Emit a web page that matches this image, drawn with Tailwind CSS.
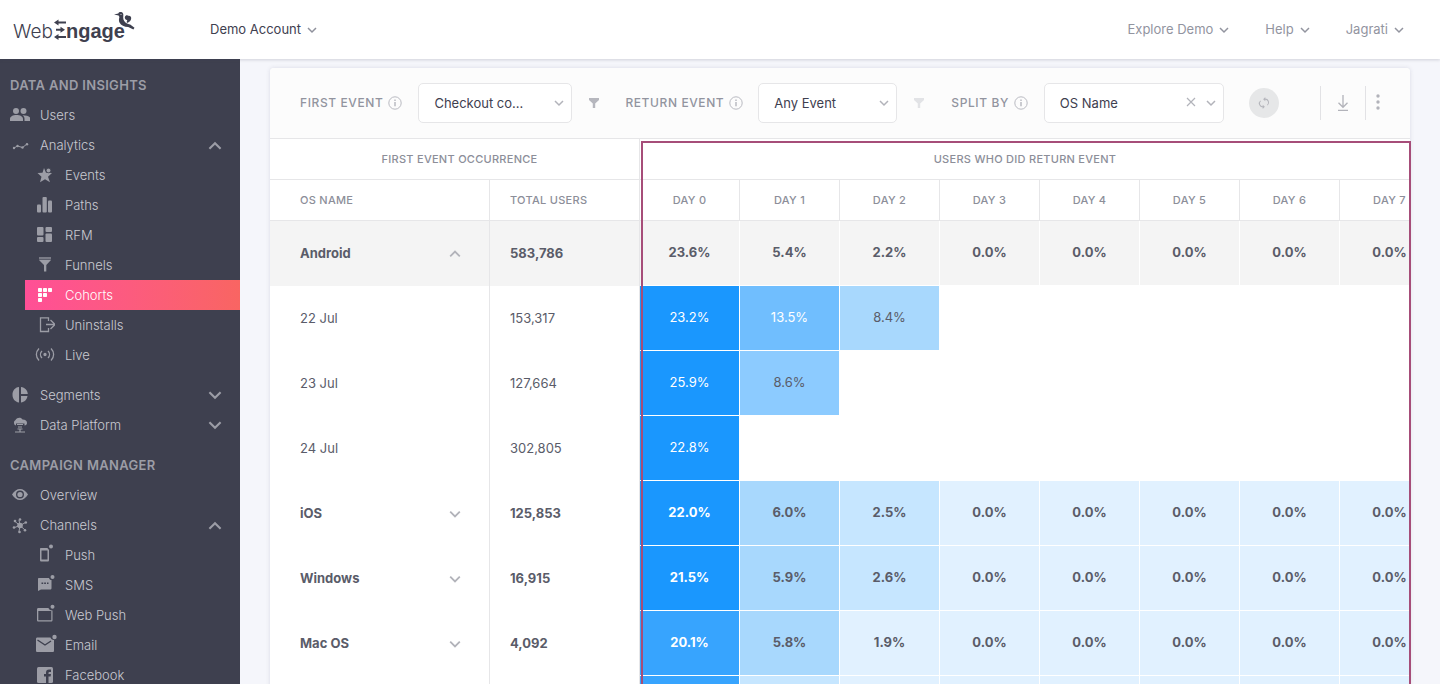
<!DOCTYPE html>
<html lang="en">
<head>
<meta charset="utf-8">
<meta name="viewport" content="width=device-width, initial-scale=1">
<title>WebEngage Cohorts</title>
<script src="https://cdn.jsdelivr.net/npm/@tailwindcss/browser@4"></script>
</head>
<body class="flex h-screen flex-col overflow-hidden bg-[#f5f6fb] font-['Inter',sans-serif] text-[13px] text-[#3e404f]">

<svg class="hidden" aria-hidden="true">
  <symbol id="down" viewBox="0 0 10 10"><path d="M1 3l4 4 4-4" fill="none" stroke="currentColor" stroke-width="1.5"/></symbol>
  <symbol id="up" viewBox="0 0 10 10"><path d="M1 7l4-4 4 4" fill="none" stroke="currentColor" stroke-width="1.5"/></symbol>
  <symbol id="info" viewBox="0 0 14 14"><circle cx="7" cy="7" r="6.2" fill="none" stroke="currentColor"/><path d="M7 6v4.2M7 3.6v1.4" stroke="currentColor" stroke-width="1.5"/></symbol>
  <symbol id="filter" viewBox="0 0 12 12"><path d="M1 1h10v2L7.2 6.5V11H4.8V6.5L1 3z" fill="currentColor"/></symbol>
</svg>

<header class="relative z-20 flex h-[59px] shrink-0 items-center bg-white pr-9 shadow-[0_1px_3px_rgba(60,60,80,0.2)]">
  <a href="#" aria-label="WebEngage" class="w-[210px] shrink-0 text-[#3e404f]">
    <svg class="h-[59px] w-[140px]" viewBox="0 0 140 59" fill="currentColor">
      <text x="13" y="38" font-family="Inter" font-weight="300" font-size="19">Web</text>
      <path d="M58 22.500h8M56 29.800h6M58 36.900h8" fill="none" stroke="currentColor" stroke-width="2"/>
      <path d="M54 22.500l4.500-3v6zM65 29.800l-4.500-3v6zM54 36.900l4.500-3v6z"/>
      <text x="66" y="38" font-family="Liberation Sans" font-weight="700" font-size="20">ngage</text>
      <path d="M114 14.400l4.300-1c.6-1.200 1.800-1.700 3.100-1.300 1.600.5 2.200 2 1.900 3.700-.4 2.600.2 5.200 2.200 6.600 1.400 1 3.100 1.400 4.700 2.200l4.300 3.100-1.100 1.700-5.200-2.400c-4 0-7.200-1.700-8.700-4.500-.9-1.700-.6-3.600-.1-5.600l-.8-1.300z"/>
      <path d="M124.800 17.200c.7-1.800 2-2.300 3.200-1.400 1.900-.6 3.300.6 3.200 2.500-.1 2.400-1.900 4-4.200 4.700-.4-1.100-.2-1.900.3-2.800-1.700-.3-2.600-1.500-2.500-3z"/>
      <circle cx="121" cy="14.600" r=".5" fill="white"/>
    </svg>
  </a>
  <button class="flex items-center gap-1.5">Demo Account <svg class="size-[10px] text-[#8f919c]"><use href="#down"/></svg></button>
  <nav class="ml-auto flex gap-9 text-[#92949f]">
    <button class="flex items-center gap-1.5">Explore Demo <svg class="size-[10px]"><use href="#down"/></svg></button>
    <button class="flex items-center gap-1.5">Help <svg class="size-[10px]"><use href="#down"/></svg></button>
    <button class="flex items-center gap-1.5">Jagrati <svg class="size-[10px]"><use href="#down"/></svg></button>
  </nav>
</header>

<div class="flex min-h-0 flex-1">
  <aside class="w-60 shrink-0 overflow-hidden bg-[#3e404f] pt-[11px] text-[#c9cad1] [&_a]:flex [&_a]:h-[30px] [&_a]:items-center [&_a]:pt-0.5 [&_a]:font-light [&_h2]:flex [&_h2]:h-[30px] [&_h2]:items-center [&_h2]:pt-0.5 [&_h2]:pl-2.5 [&_h2]:font-semibold [&_h2]:text-[#9c9da6] [&_a>svg]:shrink-0 [&_a>svg]:text-[#9c9da6] [&_a>svg:first-child]:size-5">
    <h2 class="tracking-wide">DATA AND INSIGHTS</h2>
    <nav aria-label="Data and insights">
      <a href="#" class="gap-2.5 pl-2.5"><svg viewBox="0 0 20 20" fill="currentColor"><circle cx="6" cy="5" r="3"/><circle cx="13.500" cy="5" r="3"/><path d="M0 15v-2c0-2.500 3-4 6.500-4s6.500 1.500 6.500 4v2zM14.500 15v-2c0-1.600-.7-2.800-2-3.700 4 0 8 1.200 8 3.700v2z"/></svg>Users</a>
      <a href="#" class="gap-2.5 pl-2.5"><svg viewBox="0 0 20 20" fill="currentColor"><path d="M4 12l3.500-2 5 1.500L17 8" fill="none" stroke="currentColor"/><circle cx="4" cy="12" r="1.200"/><circle cx="7.500" cy="10" r="1.200"/><circle cx="12.500" cy="11.500" r="1.200"/><circle cx="17" cy="8.300" r="1.200"/></svg>Analytics<svg class="ml-auto mr-[18px] size-[14px]"><use href="#up"/></svg></a>
      <a href="#" class="gap-2.5 pl-[35px]"><svg viewBox="0 0 20 20" fill="currentColor"><path d="M9 2l2 4.800 6 .1-4 3.900 2 5.500-5-3-5 3 1.500-5.500L2.500 7l5-.3z"/><circle cx="13.500" cy="4.500" r="2.300" stroke="#3e404f" stroke-width=".7"/></svg>Events</a>
      <a href="#" class="gap-2.5 pl-[35px]"><svg viewBox="0 0 20 20" fill="currentColor"><rect x="2" y="8.500" width="4" height="8" rx="1"/><rect x="7.500" y="1" width="4.300" height="15.500" rx="1"/><rect x="13" y="4.500" width="4" height="12" rx="1"/></svg>Paths</a>
      <a href="#" class="gap-2.5 pl-[35px]"><svg viewBox="0 0 20 20" fill="currentColor"><rect x="2" y="1" width="6.500" height="8.500" rx="1"/><rect x="10.500" y="1" width="6.500" height="5" rx="1"/><rect x="2" y="11" width="6.500" height="5" rx="1"/><rect x="10.500" y="7.500" width="6.500" height="8.500" rx="1"/></svg>RFM</a>
      <a href="#" class="gap-2.5 pl-[35px]"><svg viewBox="0 0 20 20" fill="currentColor"><path d="M4 1h12v2.500H4z" opacity=".65"/><path d="M4 4h12l-4.700 5v6.500H9V9z"/></svg>Funnels</a>
      <a href="#" aria-current="page" class="ml-[25px] gap-2.5 bg-linear-to-r from-[#ff4f96] to-[#f96562] pl-2.5 text-white"><svg viewBox="0 0 20 20" fill="white"><rect x="3" y="2" width="4" height="4" rx=".7"/><rect x="8" y="2" width="4" height="4" rx=".7"/><rect x="13" y="2" width="4" height="4" rx=".7"/><rect x="3" y="7" width="4" height="4" rx=".7"/><rect x="8" y="7" width="4" height="4" rx=".7"/><rect x="3" y="12" width="4" height="4" rx=".7"/></svg>Cohorts</a>
      <a href="#" class="gap-2.5 pl-[35px]"><svg viewBox="0 0 20 20" fill="none" stroke="currentColor" stroke-width="1.300"><path d="M13.500 5V1.800h-8v13.700h8V12M11 8.500h9M15.500 4l4.500 4.500-4.500 4.500"/></svg>Uninstalls</a>
      <a href="#" class="gap-2.5 pl-[35px]"><svg viewBox="0 0 20 20" fill="none" stroke="currentColor" stroke-width="1.300"><circle cx="10" cy="8.500" r="1" fill="currentColor"/><path d="M7 5c-2 2-2 5 0 7M13 5c2 2 2 5 0 7M4 2.500c-3.500 3.500-3.500 8.500 0 12M16 2.500c3.500 3.500 3.500 8.500 0 12"/></svg>Live</a>
      <a href="#" class="mt-2.5 gap-2.5 pl-2.5"><svg viewBox="0 0 20 20" fill="currentColor"><path d="M9 1v15.500C4.800 16 2.500 12.800 2.500 8.800S4.800 1.500 9 1zM11 1c4 .5 6.500 3 6.800 7H11zM11 10h6.500c-.5 3.500-3 6-6.500 6.500z"/></svg>Segments<svg class="mb-0.5 ml-auto mr-[18px] size-[14px]"><use href="#down"/></svg></a>
      <a href="#" class="gap-2.5 pl-2.5"><svg viewBox="0 0 20 20" fill="currentColor"><path d="M6 9.500a3 3 0 0 1-.5-5.500C7 1.500 11 1 12.500 3.500c3 0 4.500 1.500 4.500 3.500 0 1.500-1 2.500-2.500 2.500V7.500H6z"/><path d="M7 8.500h6M8 11h4M7.500 13h5M10 13v3M5 16h10" fill="none" stroke="currentColor" stroke-width="1.200"/></svg>Data Platform<svg class="mb-0.5 ml-auto mr-[18px] size-[14px]"><use href="#down"/></svg></a>
    </nav>
    <h2 class="mt-2.5 tracking-wide">CAMPAIGN MANAGER</h2>
    <nav aria-label="Campaign manager">
      <a href="#" class="gap-2.5 pl-2.5"><svg viewBox="0 0 20 20" fill="currentColor"><path fill-rule="evenodd" d="M2 8.500C4 5 7 3 10 3s6 2 8 5.500c-2 3.500-5 5.500-8 5.500s-6-2-8-5.500zM10 4.500a4 4 0 1 0 0 8 4 4 0 0 0 0-8z"/><circle cx="10" cy="8.500" r="2.600"/></svg>Overview</a>
      <a href="#" class="gap-2.5 pl-2.5"><svg viewBox="0 0 20 20" fill="currentColor"><path d="M10 9.500L9 4M10 9.500l5.500-3M10 9.500l5 4.500M10 9.500l-1 6M10 9.500l-5.500 2M10 9.500L5 5.500" stroke="currentColor"/><circle cx="10" cy="9.500" r="2.800"/><circle cx="10" cy="3.500" r="1.300"/><circle cx="15.800" cy="6.500" r="1.300"/><circle cx="15" cy="14.300" r="1.300"/><circle cx="9.500" cy="16" r="1.300"/><circle cx="4" cy="11.500" r="1.300"/><circle cx="5" cy="5" r="1.300"/></svg>Channels<svg class="ml-auto mr-[18px] size-[14px]"><use href="#up"/></svg></a>
      <a href="#" class="gap-2.5 pl-[35px]"><svg class="overflow-visible" viewBox="0 0 20 20" fill="currentColor"><path fill-rule="evenodd" d="M6 2h6.500c.2.800.8 1.400 1.500 1.700V14c0 1-.5 1.500-1.500 1.500h-6C5.500 15.500 5 15 5 14V3c0-.6.400-1 1-1zM6.500 4.500v9h6v-9z"/><circle cx="16" cy=".5" r="2"/></svg>Push</a>
      <a href="#" class="gap-2.5 pl-[35px]"><svg class="overflow-visible" viewBox="0 0 20 20" fill="currentColor"><path fill-rule="evenodd" d="M4 2h10c.4 1.500 1.300 2 2.500 2v8c0 1-.5 1.500-1.500 1.500H6L3 15V3c0-.6.400-1 1-1zM6.500 6.500V8h1.700V6.500zM9.200 6.500V8h1.700V6.500zM12 6.500V8h1.500V6.500z"/><circle cx="17.500" cy="1" r="2"/></svg>SMS</a>
      <a href="#" class="gap-2.5 pl-[35px]"><svg class="overflow-visible" viewBox="0 0 20 20" fill="currentColor"><path fill-rule="evenodd" d="M3.500 2h10c.5 1.500 1.500 2.500 4 2.500V14c0 1-.5 1.500-1.500 1.500H3.500c-1 0-1.500-.5-1.500-1.500V3.500C2 2.500 2.500 2 3.500 2zM3.300 5v9.200h13V5z"/><circle cx="17.500" cy=".8" r="2"/></svg>Web Push</a>
      <a href="#" class="gap-2.5 pl-[35px]"><svg class="overflow-visible" viewBox="0 0 20 20" fill="currentColor"><path d="M2.500 1.500h13c.5 1.500 1.500 2.500 3.500 2.500v10.500c0 1-.5 1.500-1.500 1.500h-15C1.500 16 1 15.500 1 14.500V3c0-1 .5-1.500 1.500-1.500z"/><path d="M2.500 4l7.500 5 6-4" fill="none" stroke="#3e404f" stroke-width="1.400"/><circle cx="19.500" cy="1" r="2.200"/></svg>Email</a>
      <a href="#" class="gap-2.5 pl-[35px]"><svg viewBox="0 0 20 20" fill="currentColor"><rect x="2" y="1" width="16" height="16" rx="1.500"/><path d="M11 17v-6.500H9V8h2V6.500C11 4.500 12 3.500 14 3.500h2V6h-1.300c-.8 0-1.200.3-1.200 1v1H16l-.4 2.500h-2.100V17z" fill="#3e404f"/></svg>Facebook</a>
    </nav>
  </aside>

  <main class="min-w-0 flex-1 px-[30px] pt-[9px]">
    <section class="rounded-[4px] bg-white shadow-[0_0_4px_rgba(60,60,100,0.15)]">
      <form class="flex h-[71px] items-center rounded-t-[4px] border-b border-[#e6e6e8] bg-[#fcfcfc] pl-[30px] text-xs font-medium text-[#92949f]">
        <label for="first" class="tracking-wider">FIRST EVENT</label>
        <svg class="ml-[5px] size-[14px] text-[#b9bac1]"><use href="#info"/></svg>
        <div class="relative ml-4">
          <select id="first" class="block h-10 w-[154px] appearance-none rounded-[5px] border border-[#e6e6e8] bg-white pt-0.5 pl-[15px] text-[13px] font-normal text-[#3e404f]"><option>Checkout co...</option></select>
          <svg class="pointer-events-none absolute top-[15px] right-2 size-[10px] text-[#b2b3ba]"><use href="#down"/></svg>
        </div>
        <button type="button" aria-label="Filter first event" class="ml-4 text-[#b6b7be]"><svg class="size-3"><use href="#filter"/></svg></button>
        <label for="return" class="ml-[25px] tracking-wider">RETURN EVENT</label>
        <svg class="ml-[5px] size-[14px] text-[#b9bac1]"><use href="#info"/></svg>
        <div class="relative ml-[15px]">
          <select id="return" class="block h-10 w-[139px] appearance-none rounded-[5px] border border-[#e6e6e8] bg-white pt-0.5 pl-[15px] text-[13px] font-normal text-[#3e404f]"><option>Any Event</option></select>
          <svg class="pointer-events-none absolute top-[15px] right-2 size-[10px] text-[#b2b3ba]"><use href="#down"/></svg>
        </div>
        <button type="button" aria-label="Filter return event" class="ml-4 text-[#e2e3e6]"><svg class="size-3"><use href="#filter"/></svg></button>
        <label for="split" class="ml-[26px] tracking-wider">SPLIT BY</label>
        <svg class="ml-[5px] size-[14px] text-[#b9bac1]"><use href="#info"/></svg>
        <div class="relative ml-4">
          <select id="split" class="block h-10 w-[180px] appearance-none rounded-[5px] border border-[#e6e6e8] bg-white pt-0.5 pl-[15px] text-[13px] font-normal text-[#3e404f]"><option>OS Name</option></select>
          <button type="button" aria-label="Clear" class="absolute top-[14px] right-7 text-[#b2b3ba]"><svg class="size-[10px]" viewBox="0 0 10 10"><path d="M1 1l8 8M9 1L1 9" stroke="currentColor" stroke-width="1.200"/></svg></button>
          <svg class="pointer-events-none absolute top-[15px] right-2 size-[10px] text-[#b2b3ba]"><use href="#down"/></svg>
        </div>
        <button type="button" aria-label="Refresh" class="ml-[25px] grid size-[30px] place-items-center rounded-full bg-[#e6e7e8] text-[#b5b6bc]"><svg class="size-3" viewBox="0 0 14 14" fill="none" stroke="currentColor" stroke-width="1.200"><path d="M7 2.500h1A4 4 0 0 1 11 9.500M7 11.500H6A4 4 0 0 1 3 4.500"/><path d="M8.500 0L6 2.500 8.500 5zM5.500 9L8 11.500 5.500 14z" fill="currentColor" stroke="none"/></svg></button>
        <div class="ml-auto flex h-[34px] items-center text-[#b2b3ba]">
          <button type="button" aria-label="Download" class="grid h-full w-[45px] place-items-center border-l border-[#e2e2e5]"><svg class="size-4" viewBox="0 0 16 16" fill="none" stroke="currentColor" stroke-width="1.300"><path d="M8 0v12M3.500 7.800L8 12.300l4.500-4.500M3 15.300h10"/></svg></button>
          <button type="button" aria-label="More options" class="grid h-full w-[45px] place-items-start border-l border-[#e2e2e5] pl-[10px]"><svg class="mt-2 h-4 w-1" viewBox="0 0 4 16" fill="currentColor"><circle cx="2" cy="2" r="1.700"/><circle cx="2" cy="8" r="1.700"/><circle cx="2" cy="14" r="1.700"/></svg></button>
        </div>
      </form>

      <div class="relative flex">
        <div class="w-[370px] shrink-0 border-r border-[#e6e6e8]">
          <h3 class="h-[41px] border-b border-[#e6e6e8] pl-2.5 text-center text-[11px]/[40px] font-medium tracking-wide text-[#8c8e99]">FIRST EVENT OCCURRENCE</h3>
          <table class="w-full table-fixed border-separate border-spacing-0 [&_td]:px-5 [&_th]:border-b [&_th]:border-[#e6e6e8] [&_th]:px-5 [&_td:first-child]:border-r [&_td:first-child]:border-[#e6e6e8] [&_td:first-child]:pl-[30px] [&_th:first-child]:border-r [&_th:first-child]:pl-[30px] [&_tbody_tr]:h-[65px]">
            <thead><tr class="h-[41px] text-left text-[11px] text-[#8c8e99] [&>th]:font-medium [&>th]:tracking-wide"><th class="w-[220px]">OS NAME</th><th>TOTAL USERS</th></tr></thead>
            <tbody class="text-[#5a5c69]">
              <tr class="bg-[#f4f4f4] font-bold"><td><div class="flex items-center justify-between pr-2">Android<button aria-label="Collapse Android"><svg class="size-3 text-[#b2b3ba]"><use href="#up"/></svg></button></div></td><td>583,786</td></tr>
              <tr><td>22 Jul</td><td>153,317</td></tr>
              <tr><td>23 Jul</td><td>127,664</td></tr>
              <tr><td>24 Jul</td><td>302,805</td></tr>
              <tr class="font-bold"><td><div class="flex items-center justify-between pr-2">iOS<button aria-label="Expand iOS"><svg class="size-3 text-[#b2b3ba]"><use href="#down"/></svg></button></div></td><td>125,853</td></tr>
              <tr class="font-bold"><td><div class="flex items-center justify-between pr-2">Windows<button aria-label="Expand Windows"><svg class="size-3 text-[#b2b3ba]"><use href="#down"/></svg></button></div></td><td>16,915</td></tr>
              <tr class="font-bold"><td><div class="flex items-center justify-between pr-2">Mac OS<button aria-label="Expand Mac OS"><svg class="size-3 text-[#b2b3ba]"><use href="#down"/></svg></button></div></td><td>4,092</td></tr>
              <tr><td></td><td></td></tr>
            </tbody>
          </table>
        </div>
        <div class="min-w-0 flex-1 overflow-hidden">
          <h3 class="h-[41px] border-b border-[#e6e6e8] text-center text-[11px]/[40px] font-medium tracking-wide text-[#8c8e99]">USERS WHO DID RETURN EVENT</h3>
          <table class="w-[800px] table-fixed border-separate border-spacing-0 text-center [&_td]:border-r [&_td]:border-b [&_td]:border-white [&_th]:border-r [&_th]:border-b [&_th]:border-[#e6e6e8] [&_tbody_tr]:h-[65px]">
            <thead><tr class="h-[41px] text-[11px] text-[#8c8e99] [&>th]:font-medium [&>th]:tracking-wide"><th>DAY 0</th><th>DAY 1</th><th>DAY 2</th><th>DAY 3</th><th>DAY 4</th><th>DAY 5</th><th>DAY 6</th><th>DAY 7</th></tr></thead>
            <tbody class="text-[#5a5c69]">
              <tr class="bg-[#f4f4f4] font-bold"><td>23.6%</td><td>5.4%</td><td>2.2%</td><td>0.0%</td><td>0.0%</td><td>0.0%</td><td>0.0%</td><td>0.0%</td></tr>
              <tr><td class="bg-[#1a97fe] text-white">23.2%</td><td class="bg-[#70befe] text-white">13.5%</td><td class="bg-[#a8d8fd]">8.4%</td><td colspan="5"></td></tr>
              <tr><td class="bg-[#1a97fe] text-white">25.9%</td><td class="bg-[#8ccbff]">8.6%</td><td colspan="6"></td></tr>
              <tr><td class="bg-[#1a97fe] text-white">22.8%</td><td colspan="7"></td></tr>
              <tr class="bg-[#e1f1ff] font-bold"><td class="bg-[#1a97fe] text-white">22.0%</td><td class="bg-[#a8d8fd]">6.0%</td><td class="bg-[#c6e6ff]">2.5%</td><td>0.0%</td><td>0.0%</td><td>0.0%</td><td>0.0%</td><td>0.0%</td></tr>
              <tr class="bg-[#e1f1ff] font-bold"><td class="bg-[#1a97fe] text-white">21.5%</td><td class="bg-[#a8d8fd]">5.9%</td><td class="bg-[#c6e6ff]">2.6%</td><td>0.0%</td><td>0.0%</td><td>0.0%</td><td>0.0%</td><td>0.0%</td></tr>
              <tr class="bg-[#e1f1ff] font-bold"><td class="bg-[#37a4fe] text-white">20.1%</td><td class="bg-[#a8d8fd]">5.8%</td><td>1.9%</td><td>0.0%</td><td>0.0%</td><td>0.0%</td><td>0.0%</td><td>0.0%</td></tr>
              <tr class="bg-[#e1f1ff]"><td class="bg-[#37a4fe]"></td><td class="bg-[#c6e6ff]"></td><td></td><td></td><td></td><td></td><td></td><td></td></tr>
            </tbody>
          </table>
        </div>
        <div class="pointer-events-none absolute top-0.5 -right-px bottom-0 left-[371px] border-2 border-[#a64d79]"></div>
      </div>
    </section>
  </main>
</div>
</body>
</html>
